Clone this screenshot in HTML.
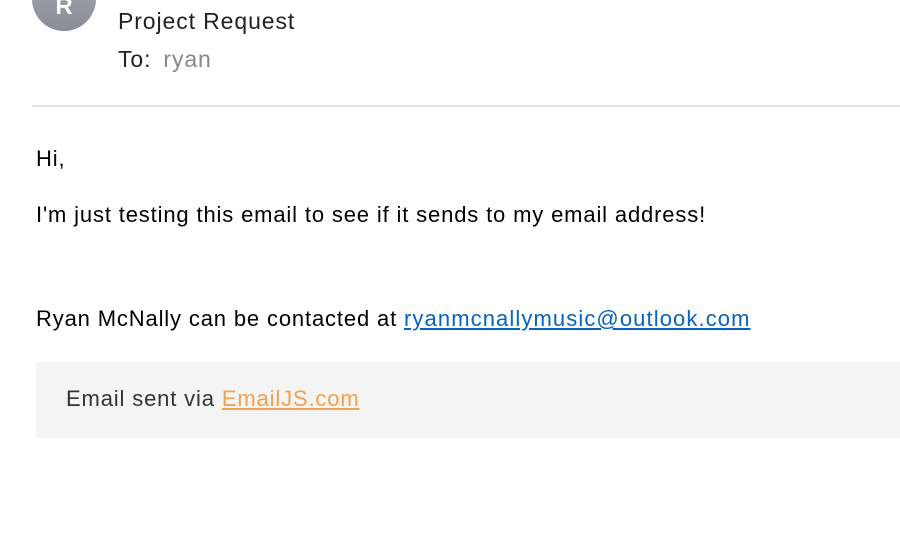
<!DOCTYPE html>
<html><head><style>
body{margin:0;width:900px;height:548px;background:#fff;position:relative;overflow:hidden;font-family:"Liberation Sans",sans-serif;}
.av{position:absolute;left:32px;top:-33px;width:64px;height:64px;border-radius:50%;background:linear-gradient(#a5a8b2,#8a8d96);color:#fff;font-size:24px;font-weight:bold;text-align:center;line-height:80px;}
.subj{position:absolute;left:118px;top:8px;font-size:23px;letter-spacing:0.9px;color:#222;}
.to{position:absolute;left:118px;top:46px;font-size:23px;letter-spacing:0.9px;color:#222;}
.to span{color:#888;margin-left:12px}
.hr{position:absolute;left:32px;right:0;top:105px;height:2px;background:#e2e2e2;}
.t{position:absolute;left:36px;font-size:22px;letter-spacing:0.85px;color:#000;white-space:nowrap;}
a{color:#0563c1;text-decoration:underline;}
.t a{letter-spacing:1.1px}
.foot{position:absolute;left:36px;right:0;top:362px;height:76px;background:#f4f4f4;}
.foot div{position:absolute;left:30px;top:24px;font-size:22px;letter-spacing:0.85px;color:#333;}
.foot a{color:#f6a04d}
</style></head><body>
<div class="av">R</div>
<div class="subj">Project Request</div>
<div class="to">To:<span>ryan</span></div>
<div class="hr"></div>
<div class="t" style="top:146px">Hi,</div>
<div class="t" style="top:202px">I'm just testing this email to see if it sends to my email address!</div>
<div class="t" style="top:306px">Ryan McNally can be contacted at <a>ryanmcnallymusic@outlook.com</a></div>
<div class="foot"><div>Email sent via <a>EmailJS.com</a></div></div>
</body></html>
